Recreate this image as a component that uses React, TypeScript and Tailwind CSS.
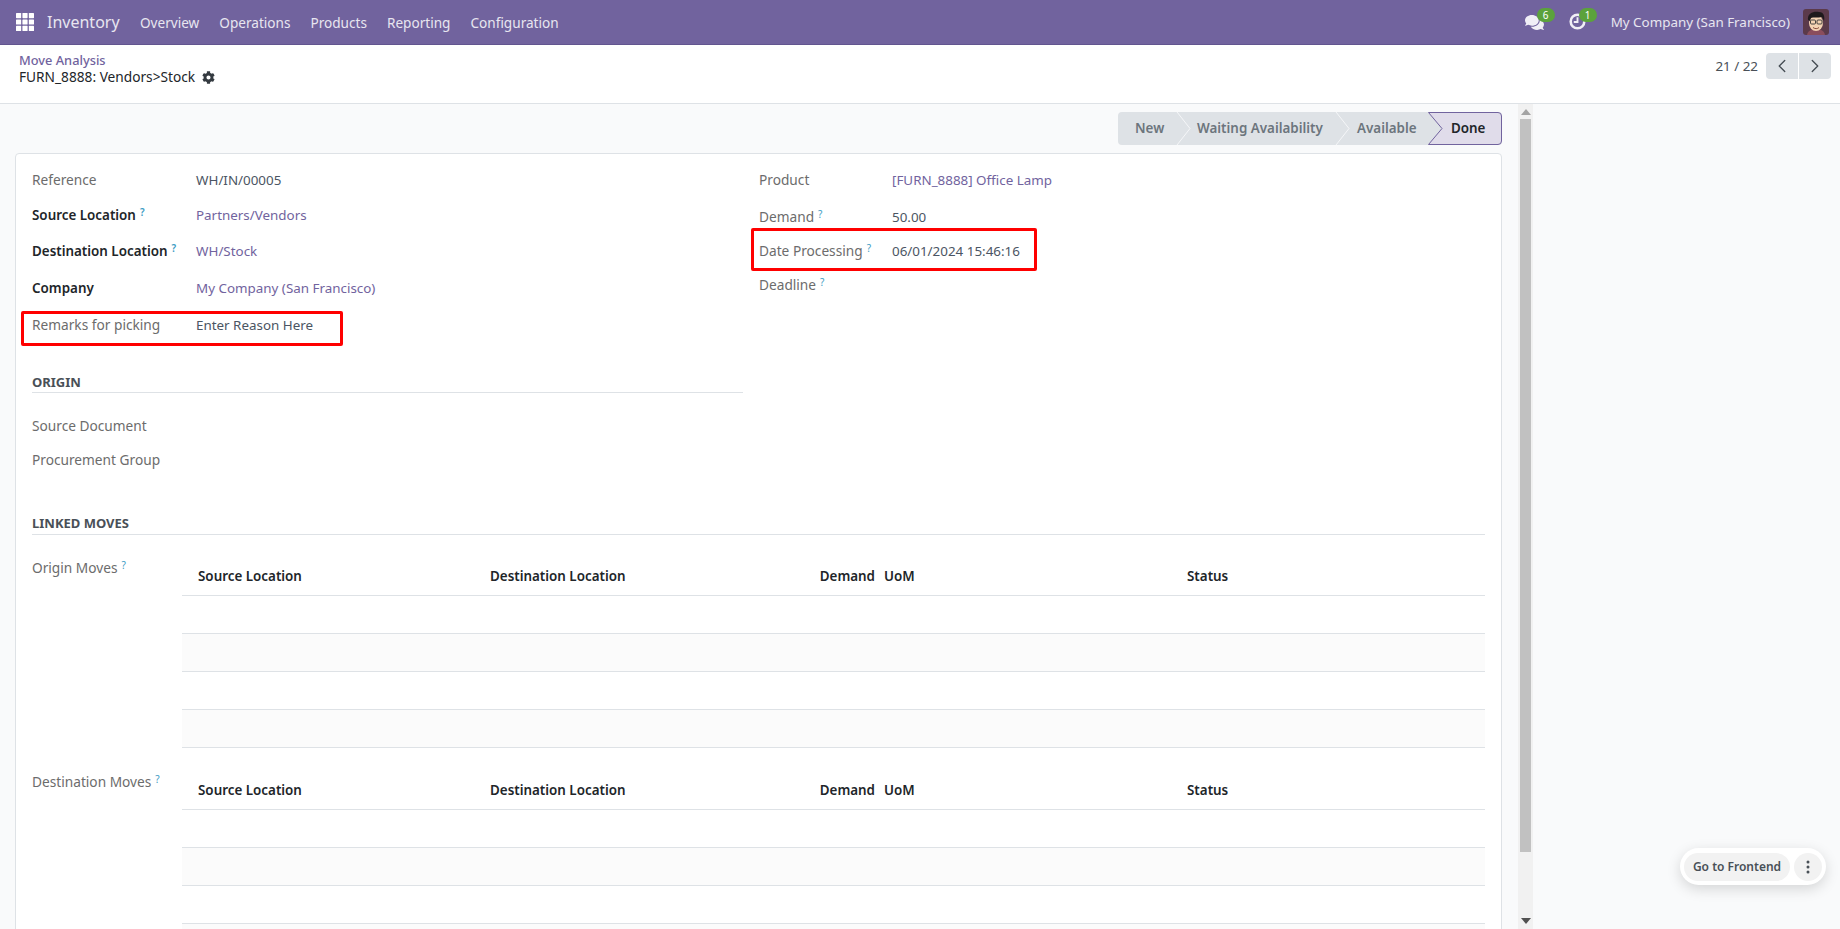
import { ChevronLeft, ChevronRight } from 'lucide-react';
import { FaCog, FaComments } from 'react-icons/fa';

const purple = 'text-[#71639e]';

function Help() {
  return <sup className="ml-1 text-[10px] text-[#3d9cc4] relative -top-[4px]">?</sup>;
}

function Highlight({ className }: { className: string }) {
  return <div className={`absolute border-[3px] border-[#ff0000] rounded-[2px] pointer-events-none ${className}`} />;
}

function Field({
  label,
  value,
  link,
  bold,
  help,
  width,
  height,
  children,
}: {
  label: string;
  value?: string;
  link?: boolean;
  bold?: boolean;
  help?: boolean;
  width: string;
  height: string;
  children?: React.ReactNode;
}) {
  return (
    <div className={`relative flex items-center ${height}`}>
      <div className={`${width} shrink-0 ${bold ? 'font-semibold text-[#212529]' : 'text-[13.7px] text-[#6c6c6c] pb-[2px]'}`}>
        {label}
        {help && <Help />}
      </div>
      {value && <div className={link ? purple : 'text-[#4b5563]'}>{value}</div>}
      {children}
    </div>
  );
}

function Section({ title, className }: { title: string; className: string }) {
  return (
    <div className={`${className} border-b border-[#dee2e6] font-bold text-[13px] leading-[24px] text-[#495057]`}>
      {title}
    </div>
  );
}

function MovesTable({ label }: { label: string }) {
  return (
    <div className="flex">
      <div className="w-[150px] shrink-0 text-[13.7px] text-[#6c6c6c] -mt-[1px]">
        {label}
        <Help />
      </div>
      <div className="flex-1">
        <div className="flex h-[38px] items-center font-semibold text-[#212529] border-b border-[#dee2e6]">
          <div className="w-[308px] pl-[16px] shrink-0">Source Location</div>
          <div className="w-[300px] shrink-0">Destination Location</div>
          <div className="w-[85px] text-right shrink-0">Demand</div>
          <div className="w-[312px] pl-[9px] shrink-0">UoM</div>
          <div>Status</div>
        </div>
        <div className="h-[38px] border-b border-[#dee2e6]" />
        <div className="h-[38px] border-b border-[#dee2e6] bg-[#fbfbfb]" />
        <div className="h-[38px] border-b border-[#dee2e6]" />
        <div className="h-[38px] border-b border-[#dee2e6] bg-[#fbfbfb]" />
      </div>
    </div>
  );
}

function StatusBar() {
  return (
    <div className="flex justify-end pt-[8px] pr-[16px] h-[49px] shrink-0">
      <div className="relative flex h-[33px] w-[384px] items-center rounded-[4px] bg-[#dee2e6] font-semibold text-[#6c757d]">
        <svg className="absolute left-0 top-0" width="384" height="33" viewBox="0 0 384 33" fill="none">
          <path d="M59 0 L72 16.5 L59 33" stroke="#f5f6f8" />
          <path d="M218 0 L231 16.5 L218 33" stroke="#f5f6f8" />
          <path d="M310.5 .5 H380 a3.5 3.5 0 0 1 3.5 3.5 V29 a3.5 3.5 0 0 1 -3.5 3.5 H310.5 L324 16.5 Z" fill="#e0dcea" stroke="#71639e" />
        </svg>
        <span className="absolute left-[17px]">New</span>
        <span className="absolute left-[79px]">Waiting Availability</span>
        <span className="absolute left-[239px]">Available</span>
        <span className="absolute left-[333px] text-[#212529]">Done</span>
      </div>
    </div>
  );
}

function Avatar() {
  return (
    <svg width="26" height="26" viewBox="0 0 26 26" className="rounded-[3px]">
      <rect width="26" height="26" fill="#5b3a4a" />
      <path d="M4 26 C5 21 9 20 13 20 C17 20 21 21 22 26 Z" fill="#8a4d5c" />
      <ellipse cx="13" cy="14" rx="7" ry="8" fill="#f3d2b3" />
      <path d="M5 11 C4 4 11 2 16 3 C21 3 22 8 21 12 L19 8 C15 9 10 8 8 9 L7 12 Z" fill="#1f1a1c" />
      <rect x="7.5" y="11" width="5" height="4" rx="1" fill="none" stroke="#333" strokeWidth="0.9" />
      <rect x="14" y="11" width="5" height="4" rx="1" fill="none" stroke="#333" strokeWidth="0.9" />
      <path d="M10 18.5 C12 20 14.5 20 16 18.5" stroke="#7a3b2e" strokeWidth="0.9" fill="none" />
    </svg>
  );
}

function Navbar() {
  return (
    <div className="flex items-center h-[45px] bg-[#71639e] border-b border-[#62558f] text-[#e8e6f0] shrink-0">
      <svg width="18" height="18" viewBox="0 0 16 16" className="ml-[16px] text-white" fill="currentColor">
        <rect x="0" y="0" width="4.6" height="4.6" rx=".5" />
        <rect x="5.7" y="0" width="4.6" height="4.6" rx=".5" />
        <rect x="11.4" y="0" width="4.6" height="4.6" rx=".5" />
        <rect x="0" y="5.7" width="4.6" height="4.6" rx=".5" />
        <rect x="5.7" y="5.7" width="4.6" height="4.6" rx=".5" />
        <rect x="11.4" y="5.7" width="4.6" height="4.6" rx=".5" />
        <rect x="0" y="11.4" width="4.6" height="4.6" rx=".5" />
        <rect x="5.7" y="11.4" width="4.6" height="4.6" rx=".5" />
        <rect x="11.4" y="11.4" width="4.6" height="4.6" rx=".5" />
      </svg>
      <div className="ml-[13px] text-[16px] w-[93px]">Inventory</div>
      <div className="flex gap-[20px] text-[13.6px]">
        <span>Overview</span>
        <span>Operations</span>
        <span>Products</span>
        <span>Reporting</span>
        <span>Configuration</span>
      </div>
      <div className="ml-auto flex items-center">
        <div className="relative w-[20px] h-[20px] mr-[24px]">
          <FaComments className="absolute left-0 top-[1px] text-[#f0eef6]" size={19} />
          <span className="absolute left-[12px] -top-[4px] h-[14px] w-[18px] rounded-full bg-[#5ba23c] text-center text-[10px] leading-[14px] text-white">6</span>
        </div>
        <div className="relative w-[20px] h-[20px] mr-[22px]">
          <svg className="absolute left-0 top-[1px]" width="17" height="17" viewBox="0 0 16 16" fill="none" stroke="#f0eef6" strokeWidth="2.4">
            <circle cx="8" cy="8" r="6.4" />
            <path d="M8 4 V8.5 H4.5" strokeWidth="1.8" />
          </svg>
          <span className="absolute left-[10px] -top-[4px] h-[14px] w-[18px] rounded-full bg-[#5ba23c] text-center text-[10px] leading-[14px] text-white">1</span>
        </div>
        <span className="mr-[13px]">My Company (San Francisco)</span>
        <div className="mr-[11px] h-[26px]"><Avatar /></div>
      </div>
    </div>
  );
}

function ControlPanel() {
  return (
    <div className="flex h-[59px] bg-white border-b border-[#dee2e6] shrink-0">
      <div className="pl-[19px] pt-[8px]">
        <div className={`text-[12.8px] leading-[15px] font-medium ${purple}`}>Move Analysis</div>
        <div className="flex items-center gap-[7px] text-[13.7px] leading-[16px] text-[#212529] mt-[1px]">
          FURN_8888: Vendors&gt;Stock
          <FaCog className="text-[#343a40]" size={13} />
        </div>
      </div>
      <div className="ml-auto flex items-start pt-[8px] pr-[9px] text-[#495057]">
        <span className="mr-[8px] leading-[26px]">21 / 22</span>
        <div className="flex h-[26px] rounded-[4px] overflow-hidden gap-[1px]">
          <div className="w-[32px] bg-[#dee2e6] flex items-center justify-center"><ChevronLeft size={22} strokeWidth={1.5} /></div>
          <div className="w-[32px] bg-[#dee2e6] flex items-center justify-center"><ChevronRight size={22} strokeWidth={1.5} /></div>
        </div>
      </div>
    </div>
  );
}

function Scrollbar() {
  return (
    <div className="w-[15px] bg-[#f1f1f1] flex flex-col items-center shrink-0">
      <svg width="10" height="6" viewBox="0 0 10 6" className="mt-[5px] mb-[4px]"><path d="M0 6 L5 0 L10 6 Z" fill="#a3a3a3" /></svg>
      <div className="w-[11px] h-[733px] bg-[#c1c1c1]" />
      <svg width="10" height="6" viewBox="0 0 10 6" className="mt-auto mb-[5px]"><path d="M0 0 L5 6 L10 0 Z" fill="#505050" /></svg>
    </div>
  );
}

function Sheet() {
  return (
    <div className="ml-[15px] mr-[16px] h-[900px] bg-white border border-[#dee2e6] rounded-t-[4px] px-[16px] pt-[9px]">
      <div className="flex">
        <div className="w-[727px] shrink-0">
          <Field label="Reference" value="WH/IN/00005" width="w-[164px]" height="h-[34px]" />
          <Field label="Source Location" value="Partners/Vendors" link bold help width="w-[164px]" height="h-[36px]" />
          <Field label="Destination Location" value="WH/Stock" link bold help width="w-[164px]" height="h-[36px]" />
          <Field label="Company" value="My Company (San Francisco)" link bold width="w-[164px]" height="h-[38px]" />
          <Field label="Remarks for picking" value="Enter Reason Here" width="w-[164px]" height="h-[37px]">
            <Highlight className="left-[-11px] top-[4px] w-[322px] h-[35px]" />
          </Field>
        </div>
        <div className="flex-1">
          <Field label="Product" value="[FURN_8888] Office Lamp" link width="w-[133px]" height="h-[34px]" />
          <Field label="Demand" value="50.00" help width="w-[133px]" height="h-[40px]" />
          <Field label="Date Processing" value="06/01/2024 15:46:16" help width="w-[133px]" height="h-[28px]">
            <Highlight className="left-[-8px] top-[-9px] w-[286px] h-[43px]" />
          </Field>
          <Field label="Deadline" help width="w-[133px]" height="h-[40px]" />
        </div>
      </div>
      <Section title="ORIGIN" className="mt-[26px] h-[23px] w-[711px]" />
      <div className="pt-[15px] pb-[1px] text-[13.7px] text-[#6c6c6c]">
        <div className="h-[34px] flex items-center">Source Document</div>
        <div className="h-[34px] flex items-center">Procurement Group</div>
      </div>
      <Section title="LINKED MOVES" className="mt-[34px] h-[24px]" />
      <div className="pt-[23px]">
        <MovesTable label="Origin Moves" />
      </div>
      <div className="pt-[24px]">
        <MovesTable label="Destination Moves" />
      </div>
    </div>
  );
}

export default function App() {
  return (
    <div className="relative flex flex-col h-[929px] w-[1840px] overflow-hidden bg-[#f9fafb] text-[13.4px] leading-[21px] [font-family:'Noto_Sans',sans-serif]">
      <Navbar />
      <ControlPanel />
      <div className="flex flex-1 min-h-0">
        <div className="w-[1518px] shrink-0 overflow-hidden">
          <StatusBar />
          <Sheet />
        </div>
        <Scrollbar />
      </div>
      <div className="absolute left-[1680px] top-[848px] flex items-center gap-[4px] h-[37px] w-[146px] rounded-full bg-white p-[4px] shadow-[0_4px_14px_rgba(0,0,0,0.15)]">
        <div className="flex h-[28px] w-[106px] items-center justify-center rounded-full bg-[#f2f2f2] text-[12px] font-semibold text-[#495057]">Go to Frontend</div>
        <div className="flex h-[28px] w-[28px] items-center justify-center rounded-full bg-[#f2f2f2]">
          <svg width="4" height="14" viewBox="0 0 4 14" fill="#495057">
            <circle cx="2" cy="2" r="1.5" />
            <circle cx="2" cy="7" r="1.5" />
            <circle cx="2" cy="12" r="1.5" />
          </svg>
        </div>
      </div>
    </div>
  );
}
